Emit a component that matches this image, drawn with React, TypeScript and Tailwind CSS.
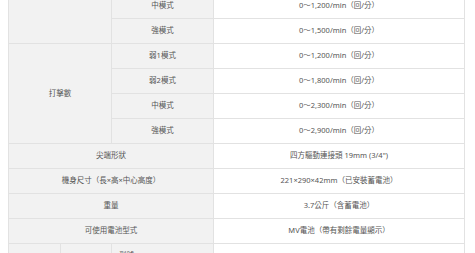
const grey = 'bg-[#f2f2f2]';
const cell = 'border border-[#e2e2e2] h-[25px] p-0 text-center align-middle';

type Row = { mode: string; value: string };

const upper: Row[] = [
  { mode: '中模式', value: '0～1,200/min（回/分）' },
  { mode: '強模式', value: '0～1,500/min（回/分）' },
];

const impacts: Row[] = [
  { mode: '弱1模式', value: '0～1,200/min（回/分）' },
  { mode: '弱2模式', value: '0～1,800/min（回/分）' },
  { mode: '中模式', value: '0～2,300/min（回/分）' },
  { mode: '強模式', value: '0～2,900/min（回/分）' },
];

const specs: Row[] = [
  { mode: '尖端形狀', value: '四方驅動連接頭 19mm (3/4")' },
  { mode: '機身尺寸（長×高×中心高度）', value: '221×290×42mm（已安裝蓄電池）' },
  { mode: '重量', value: '3.7公斤（含蓄電池）' },
  { mode: '可使用電池型式', value: 'MV電池（帶有剩餘電量顯示）' },
];

export default function App() {
  return (
    <div
      className="w-[475px] h-[253px] overflow-hidden bg-white pl-[8px] text-[7.5px] leading-none text-[#555555]"
      style={{ fontFamily: '"Noto Sans", "Noto Sans CJK TC", sans-serif' }}
    >
      <table className="-mt-[7px] w-[457px] table-fixed border-collapse">
        <colgroup>
          <col className="w-[52px]" />
          <col className="w-[51px]" />
          <col className="w-[102px]" />
          <col />
        </colgroup>
        <tbody>
          {upper.map((r, i) => (
            <tr key={'u' + i}>
              {i === 0 && <td colSpan={2} rowSpan={upper.length} className={`${cell} ${grey}`} />}
              <td className={`${cell} ${grey}`}>{r.mode}</td>
              <td className={cell}>{r.value}</td>
            </tr>
          ))}
          {impacts.map((r, i) => (
            <tr key={'i' + i}>
              {i === 0 && (
                <td colSpan={2} rowSpan={impacts.length} className={`${cell} ${grey}`}>
                  打擊數
                </td>
              )}
              <td className={`${cell} ${grey}`}>{r.mode}</td>
              <td className={cell}>{r.value}</td>
            </tr>
          ))}
          {specs.map((r, i) => (
            <tr key={'s' + i}>
              <td colSpan={3} className={`${cell} ${grey}`}>
                {r.mode}
              </td>
              <td className={cell}>{r.value}</td>
            </tr>
          ))}
          <tr>
            <td className={`${cell} ${grey}`} />
            <td className={`${cell} ${grey}`} />
            <td className={`${cell} ${grey} !text-left pl-[7px]`}>型號</td>
            <td className={cell}>BL36120A</td>
          </tr>
        </tbody>
      </table>
    </div>
  );
}
